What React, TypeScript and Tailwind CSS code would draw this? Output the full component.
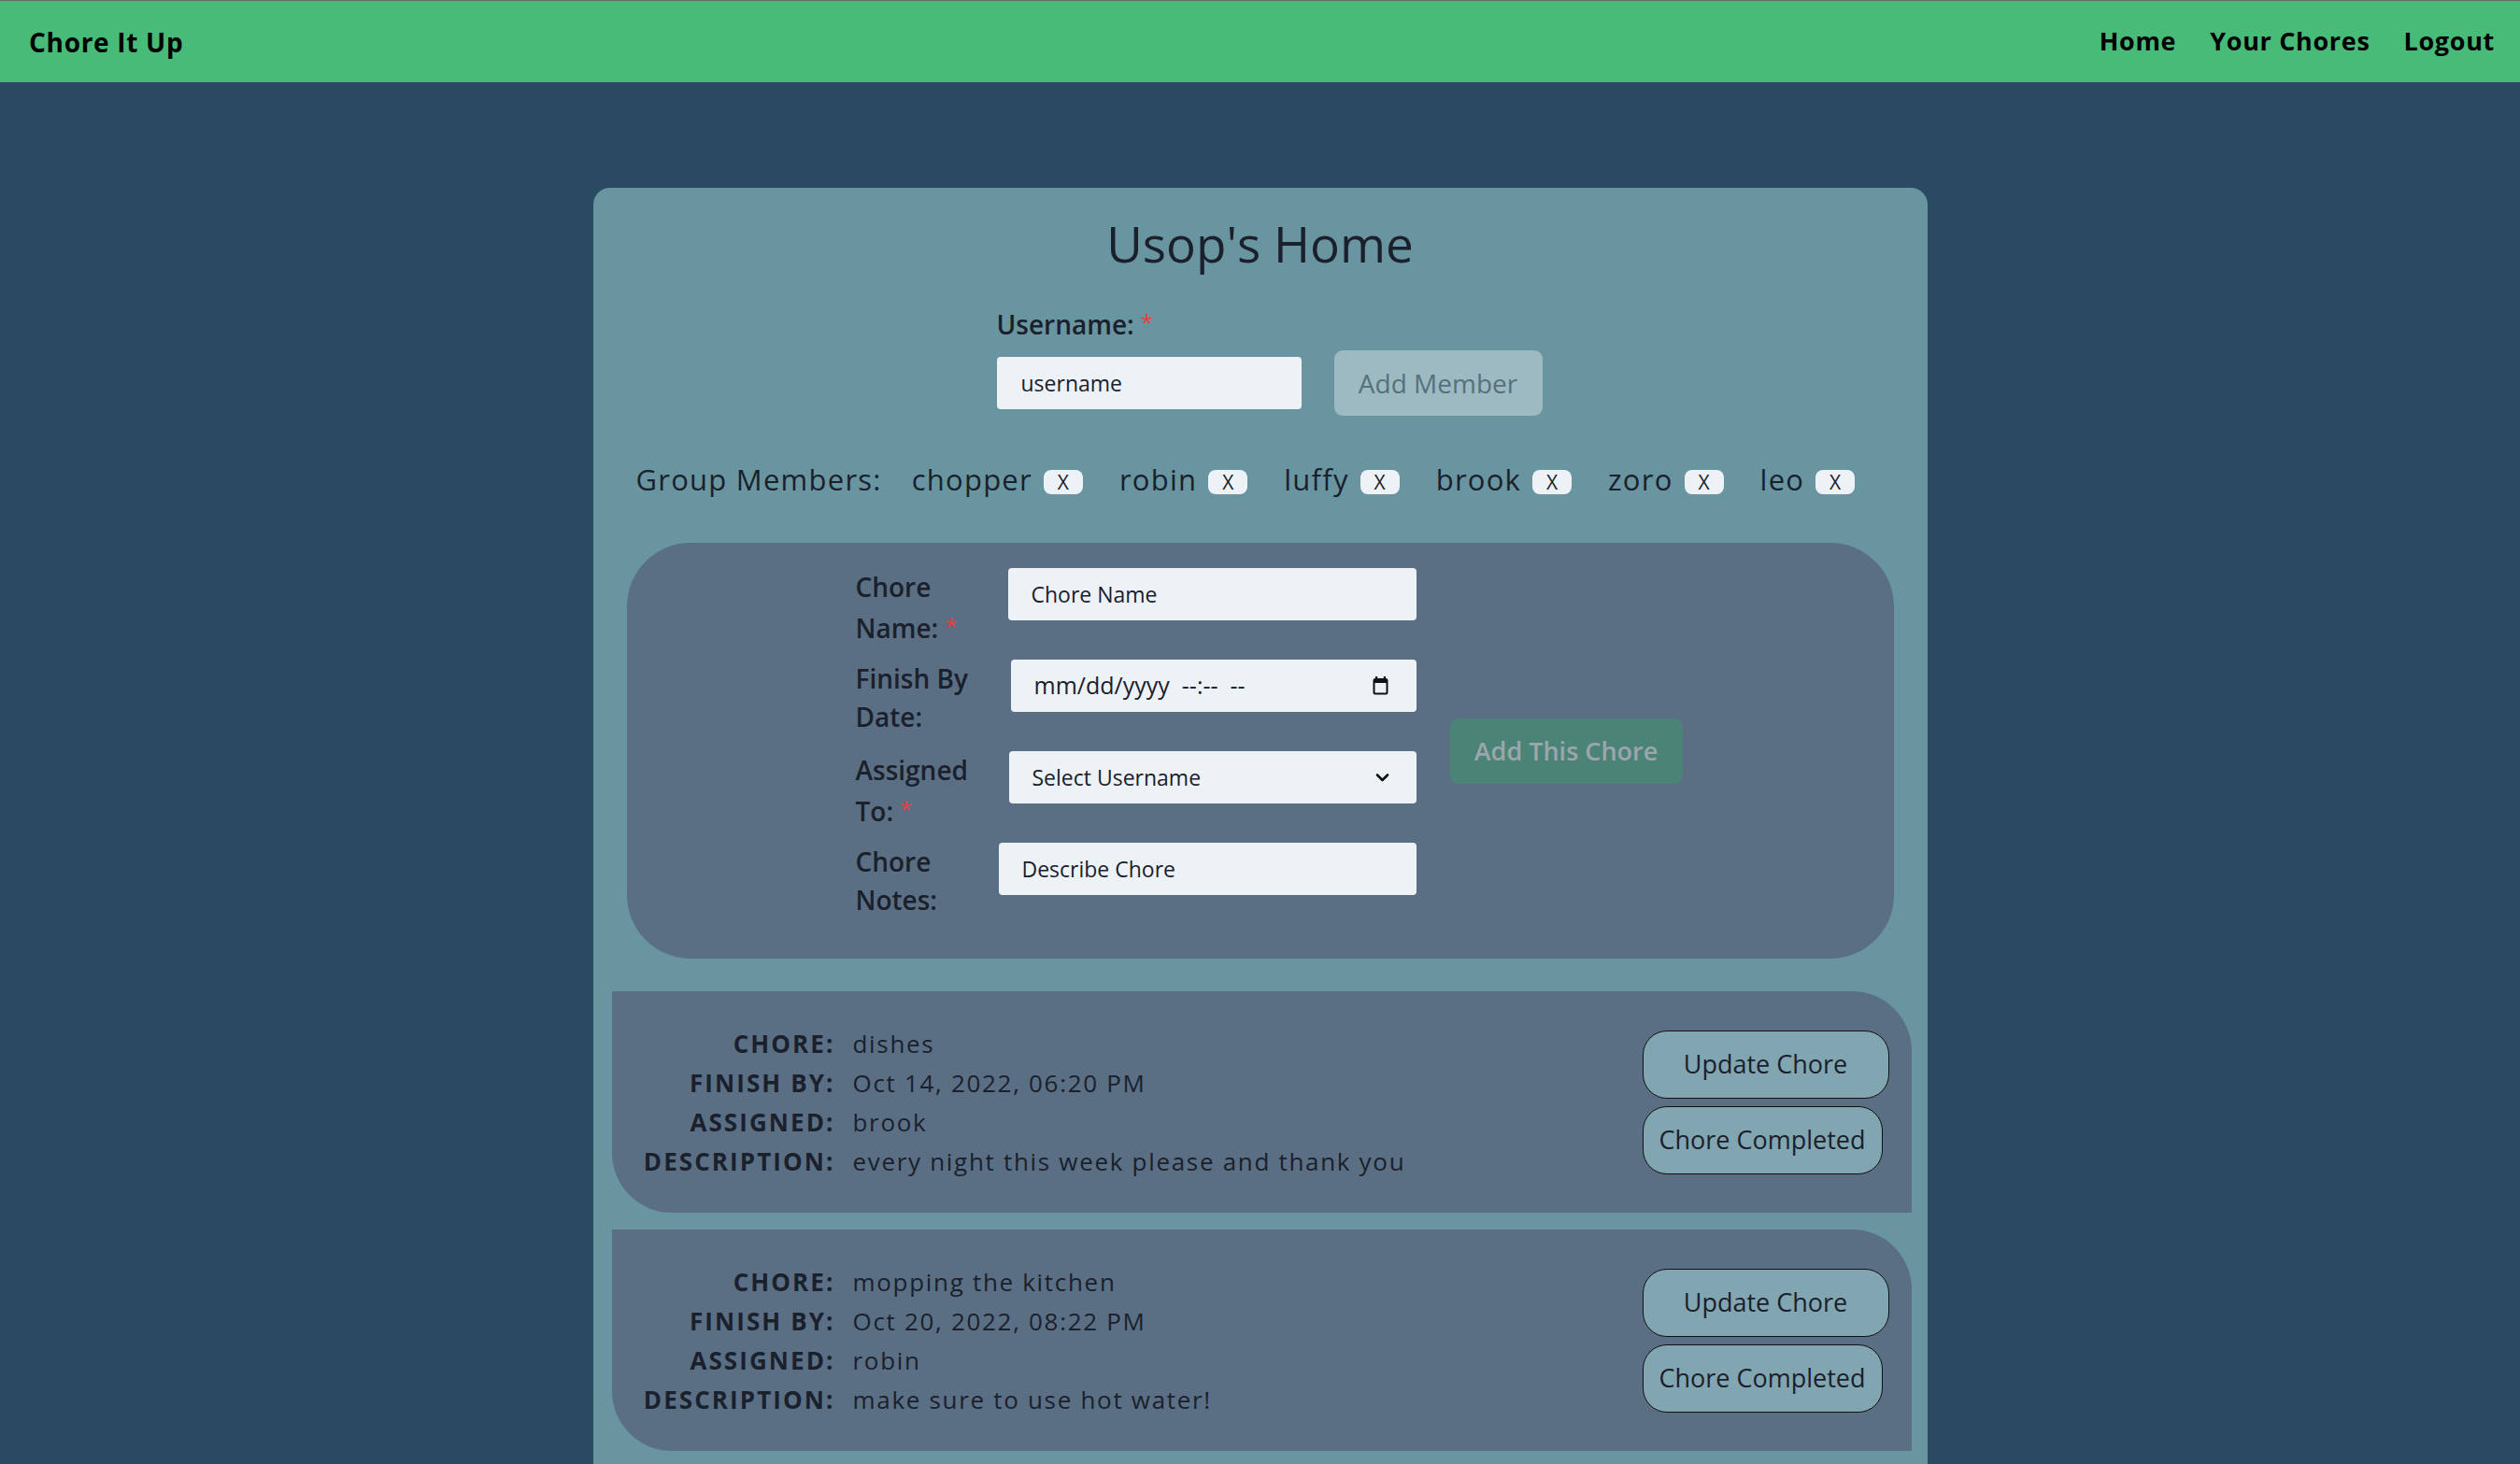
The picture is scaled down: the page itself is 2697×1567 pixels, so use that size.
import React from 'react';

const MEMBERS = ['chopper', 'robin', 'luffy', 'brook', 'zoro', 'leo'];

const CHORES = [
  {
    name: 'dishes',
    finishBy: 'Oct 14, 2022, 06:20 PM',
    assigned: 'brook',
    description: 'every night this week please and thank you',
  },
  {
    name: 'mopping the kitchen',
    finishBy: 'Oct 20, 2022, 08:22 PM',
    assigned: 'robin',
    description: 'make sure to use hot water!',
  },
];

const Req = () => <span className="ml-[7px] align-[4px] text-[24px] font-normal text-[#e53e3e]">*</span>;

function CalendarIcon() {
  return (
    <svg width="17" height="20" viewBox="0 0 17 20" fill="none">
      <rect x="3" y="0" width="2.2" height="4" fill="#111" />
      <rect x="11.8" y="0" width="2.2" height="4" fill="#111" />
      <rect x="1.5" y="3" width="14" height="15.5" rx="1.5" stroke="#111" strokeWidth="2" />
      <rect x="1.5" y="3" width="14" height="4" fill="#111" />
    </svg>
  );
}

function Chevron() {
  return (
    <svg width="17" height="12" viewBox="0 0 17 12" fill="none">
      <path d="M3 3.5 L8.5 9 L14 3.5" stroke="#111" strokeWidth="2.6" strokeLinecap="round" strokeLinejoin="round" />
    </svg>
  );
}

export default function App() {
  return (
    <div className="min-h-screen bg-[#294a62] font-['Open_Sans',sans-serif] text-[#1a202c]">
      {/* navbar */}
      <nav className="flex h-[88px] items-center justify-between border-t border-[#6b6b6b] bg-[#48bb78] pl-[31px] pr-[27px] text-black">
        <span className="text-[28px] font-bold tracking-wide">Chore It Up</span>
        <div className="flex gap-[36px] text-[27px] font-bold tracking-wide">
          <a href="#">Home</a>
          <a href="#">Your Chores</a>
          <a href="#">Logout</a>
        </div>
      </nav>

      <main className="mx-auto mt-[113px] w-[1428px] rounded-t-[18px] bg-[#6995a0] pt-[29px] pb-[15px]">
        <h1 className="text-center text-[53px] leading-[62px]">Usop's Home</h1>

        {/* add member */}
        <div className="ml-[432px] mt-[33px]">
          <label className="block text-[28px] font-semibold leading-[40px]">
            Username:<Req />
          </label>
          <div className="mt-[8px] flex items-center gap-[35px]">
            <input
              defaultValue="username"
              className="h-[56px] w-[326px] rounded-[4px] bg-[#edf2f7] px-[26px] text-[23px] text-[#1a202c] outline-none"
            />
            <button className="h-[70px] w-[223px] rounded-[9px] bg-[#9dbac2] text-[28px] text-[#56717b]">Add Member</button>
          </div>
        </div>

        {/* group members */}
        <div className="mt-[48px] flex items-center pl-[46px] text-[31px] leading-[40px] tracking-[0.04em]">
          <span className="mr-[32px]">Group Members:</span>
          <div className="flex items-center gap-[39px]">
            {MEMBERS.map((m) => (
              <div key={m} className="flex items-center">
                <span>{m}</span>
                <span className="ml-[12px] mt-[6px] flex h-[26px] w-[42px] items-center justify-center rounded-[8px] bg-[#edf2f7] text-[21px] leading-none tracking-normal">
                  X
                </span>
              </div>
            ))}
          </div>
        </div>

        {/* add chore form */}
        <div className="mx-[36px] mt-[48px] flex items-center rounded-[68px] bg-[#5a6f84] pb-[26px] pl-[245px] pt-[27px]">
          <div className="w-[600px]">
            <div className="flex h-[98px] items-start justify-between">
              <label className="w-[135px] text-[28px] font-semibold leading-[41px]">
                Chore Name:<Req />
              </label>
              <input
                placeholder="Chore Name"
                className="h-[56px] w-[437px] rounded-[4px] bg-[#edf2f7] px-[25px] text-[23px] outline-none placeholder:text-[#1a202c]"
              />
            </div>
            <div className="flex h-[98px] items-start justify-between">
              <label className="w-[135px] text-[28px] font-semibold leading-[41px]">Finish By Date:</label>
              <div className="flex h-[56px] w-[434px] items-center justify-between rounded-[4px] bg-[#edf2f7] pl-[25px] pr-[30px] text-[25px]">
                <span className="whitespace-pre">mm/dd/yyyy  --:--  --</span>
                <CalendarIcon />
              </div>
            </div>
            <div className="flex h-[98px] items-start justify-between">
              <label className="w-[135px] text-[28px] font-semibold leading-[41px]">
                Assigned To:<Req />
              </label>
              <div className="flex h-[56px] w-[436px] items-center justify-between rounded-[4px] bg-[#edf2f7] pl-[25px] pr-[28px] text-[23px]">
                <span>Select Username</span>
                <Chevron />
              </div>
            </div>
            <div className="flex h-[98px] items-start justify-between">
              <label className="w-[135px] text-[28px] font-semibold leading-[41px]">Chore Notes:</label>
              <input
                placeholder="Describe Chore"
                className="h-[56px] w-[447px] rounded-[4px] bg-[#edf2f7] px-[25px] text-[23px] outline-none placeholder:text-[#1a202c]"
              />
            </div>
          </div>
          <button className="ml-[36px] h-[70px] w-[249px] rounded-[9px] bg-[#4c8377] text-[27px] font-semibold text-[#9ba6ad]">
            Add This Chore
          </button>
        </div>

        {/* chore list */}
        <div className="ml-[20px] mr-[17px] mt-[35px] flex flex-col gap-[18px]">
          {CHORES.map((c) => (
            <div
              key={c.name}
              className="flex h-[237px] items-center justify-between rounded-bl-[64px] rounded-tr-[64px] bg-[#5a6f84] pl-[34px] pr-[24px]"
            >
              <div className="grid grid-cols-[205px_auto] gap-x-[19px] text-[26px] leading-[42px]">
                <span className="whitespace-nowrap text-right font-bold tracking-[0.08em]">CHORE:</span>
                <span className="tracking-[0.065em]">{c.name}</span>
                <span className="whitespace-nowrap text-right font-bold tracking-[0.08em]">FINISH BY:</span>
                <span className="tracking-[0.065em]">{c.finishBy}</span>
                <span className="whitespace-nowrap text-right font-bold tracking-[0.08em]">ASSIGNED:</span>
                <span className="tracking-[0.065em]">{c.assigned}</span>
                <span className="whitespace-nowrap text-right font-bold tracking-[0.08em]">DESCRIPTION:</span>
                <span className="tracking-[0.065em]">{c.description}</span>
              </div>
              <div className="flex flex-col gap-[8px]">
                <button className="h-[73px] w-[264px] rounded-[26px] border-[1.5px] border-[#111] bg-[#81a6b1] text-[27px]">
                  Update Chore
                </button>
                <button className="h-[73px] w-[257px] rounded-[26px] border-[1.5px] border-[#111] bg-[#81a6b1] text-[27px]">
                  Chore Completed
                </button>
              </div>
            </div>
          ))}
        </div>
      </main>
    </div>
  );
}
